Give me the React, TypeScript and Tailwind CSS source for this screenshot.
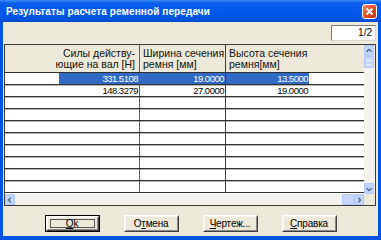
import React from "react";

const rows = [
  { a: "331.5108", b: "19.0000", c: "13.5000", sel: true },
  { a: "148.3279", b: "27.0000", c: "19.0000", sel: false },
  null, null, null, null, null, null, null, null,
];

function Btn({ children, def }: { children: React.ReactNode; def?: boolean }) {
  return (
    <div className={`w-[55px] h-[17px] ${def ? "border border-black" : ""}`}>
      <div className="w-full h-full border border-t-white border-l-white border-b-[#404040] border-r-[#404040] bg-[#ECE9D8] flex items-center justify-center relative">
        <div className="absolute inset-0 border border-t-[#f5f4ee] border-l-[#f5f4ee] border-b-[#8a8a8a] border-r-[#8a8a8a]" />
        {def && <div className="absolute left-[3px] right-[3px] top-[2px] bottom-[2px] border border-[#555]" />}
        <span className="relative text-[10px] leading-none text-black tracking-[-0.2px]">{children}</span>
      </div>
    </div>
  );
}

function Arrow({ dir }: { dir: "up" | "down" | "left" | "right" }) {
  const paths: Record<string, string> = {
    up: "M2 6 L5 3 L8 6",
    down: "M2 4 L5 7 L8 4",
    left: "M6 2 L3 5 L6 8",
    right: "M4 2 L7 5 L4 8",
  };
  return (
    <div className="w-[10px] h-[11px] bg-[#C3D4FB] border border-[#B4C8F6] rounded-[1px] flex items-center justify-center">
      <svg width="10" height="10" viewBox="0 0 10 10">
        <path d={paths[dir]} fill="none" stroke="#4D6185" strokeWidth="1.6" />
      </svg>
    </div>
  );
}

export default function App() {
  return (
    <div className="w-[381px] h-[240px] bg-[#0054E3] flex flex-col overflow-hidden font-['Liberation_Sans',Arial,sans-serif] select-none">
      {/* Title bar */}
      <div className="h-[22px] flex items-center pl-[6px] pr-[4px] bg-[linear-gradient(to_bottom,#3D8EF8_0px,#0A5FEA_3px,#0058EE_12px,#0052DE_20px,#0046C8_22px)]">
        <span className="text-white font-bold text-[10px] tracking-[0.1px] flex-1">Результаты расчета ременной передачи</span>
        <div className="w-[15px] h-[15px] rounded-[3px] border border-white bg-[linear-gradient(135deg,#F08A6C,#E04A1E_55%,#C23A14)] flex items-center justify-center">
          <svg width="9" height="9" viewBox="0 0 9 9">
            <path d="M1.5 1.5 L7.5 7.5 M7.5 1.5 L1.5 7.5" stroke="white" strokeWidth="1.8" />
          </svg>
        </div>
      </div>
      {/* Client */}
      <div className="flex-1 mx-[3px] mb-[4px] bg-[#ECE9D8] flex flex-col">
        <div className="flex justify-end pt-[3px] pr-[2px]">
          <div className="w-[45px] h-[16px] bg-white border border-t-[#7a7a7a] border-l-[#7a7a7a] border-b-[#d8d6cc] border-r-[#d8d6cc] text-[10px] leading-[14px] text-right pr-[3px] text-black">
            1/2
          </div>
        </div>
        <div className="mt-[3px] ml-[1px] mr-[2px] h-[162px] border border-[#3a3a3a] flex flex-col bg-[#ECE9D8]">
          <div className="flex flex-1 min-h-0">
            <div className="flex-1 flex flex-col overflow-hidden bg-white">
              {/* Header */}
              <div className="flex h-[28px] border-b border-[#303030] bg-[#ECE9D8] text-[10.5px] leading-[11px] text-[#111] shrink-0">
                <div className="w-[135px] border-r border-[#606060] flex flex-col justify-center items-end pr-[4px] text-right">
                  <div>Силы действу-</div>
                  <div>ющие на вал [Н]</div>
                </div>
                <div className="w-[86px] border-r border-[#404040] flex flex-col justify-center pl-[3px]">
                  <div>Ширина сечения</div>
                  <div>ремня [мм]</div>
                </div>
                <div className="flex-1 flex flex-col justify-center pl-[3px]">
                  <div>Высота сечения</div>
                  <div>ремня[мм]</div>
                </div>
              </div>
              {rows.map((r, i) => (
                <div key={i} className={`flex h-[12px] border-b border-[#303030] shrink-0 text-[9.5px] leading-[11px] tracking-[-0.5px] ${i > 0 ? "shadow-[inset_0_1px_0_#b8b8b8]" : ""}`}>
                  <div className="w-[135px] border-r border-[#606060] flex justify-end">
                    {r && (
                      <div className={`w-[80px] text-right pr-[1px] ${r.sel ? "bg-[#316AC5] text-white" : "text-black"}`}>{r.a}</div>
                    )}
                  </div>
                  <div className="w-[86px] border-r border-[#404040] flex">
                    {r && (
                      <div className={`w-full text-right pr-[1px] ${r.sel ? "bg-[#316AC5] text-white" : "text-black"}`}>{r.b}</div>
                    )}
                  </div>
                  <div className="flex-1 flex">
                    {r && (
                      <div className={`w-[83px] text-right pr-[1px] ${r.sel ? "bg-[#316AC5] text-white" : "text-black"}`}>{r.c}</div>
                    )}
                  </div>
                </div>
              ))}
            </div>
            {/* vertical scrollbar */}
            <div className="w-[11px] pr-[1px] bg-[#F3F2EC] flex flex-col">
              <Arrow dir="up" />
              <div className="w-[10px] h-[12px] bg-[#C8D7FB] border border-[#B4C8F6] rounded-[1px] flex items-center justify-center">
                <div className="w-[4px] h-[5px] border-y border-[#EEF3FF]" />
              </div>
              <div className="flex-1" />
              <Arrow dir="down" />
            </div>
          </div>
          <div className="flex h-[11px] shrink-0">
            <div className="flex-1 flex bg-[#F3F2EC]">
              <Arrow dir="left" />
              <div className="flex-1" />
              <div className="w-[12px] h-[11px] bg-[#C8D7FB] border border-[#B4C8F6] rounded-[1px]" />
              <Arrow dir="right" />
            </div>
            <div className="w-[11px] bg-[#ECE9D8]" />
          </div>
        </div>
        <div className="flex justify-center gap-[24px] mt-[9px]">
          <Btn def><span className="underline">O</span>k</Btn>
          <Btn>О<span className="underline">т</span>мена</Btn>
          <Btn><span className="underline">Ч</span>ертеж...</Btn>
          <Btn><span className="underline">С</span>правка</Btn>
        </div>
      </div>
    </div>
  );
}
